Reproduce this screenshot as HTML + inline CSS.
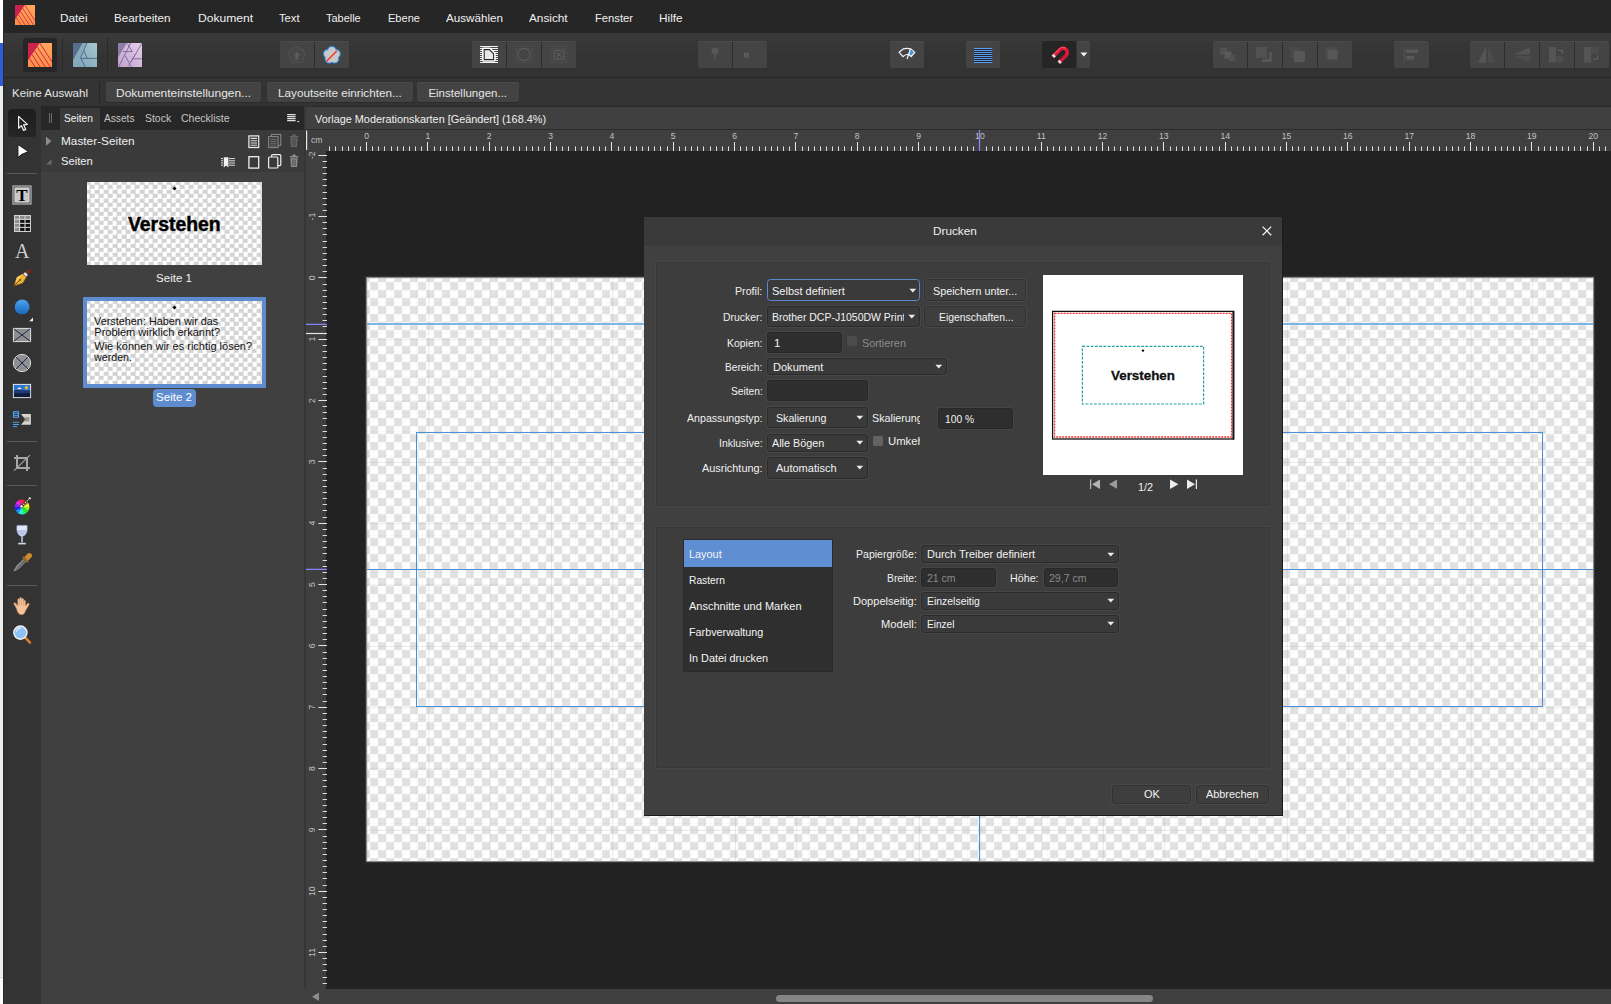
<!DOCTYPE html>
<html><head><meta charset="utf-8"><title>Affinity Publisher</title>
<style>
html,body{margin:0;padding:0;background:#222;}
body{width:1611px;height:1004px;overflow:hidden;position:relative;font-family:"Liberation Sans",sans-serif;}
#r{position:absolute;left:0;top:0;width:1611px;height:1004px;overflow:hidden;}
#r>div,#r>svg{position:absolute;display:block;}
</style></head><body><div id="r">
<div style="left:0px;top:0px;width:1611px;height:1004px;background:#222222;"></div>
<div style="left:0px;top:0px;width:1611px;height:33px;background:#262626;"></div>
<div style="left:0px;top:33px;width:1611px;height:44px;background:linear-gradient(#3a3a3a,#333333 55%);"></div>
<div style="left:0px;top:77px;width:1611px;height:1px;background:#262626;"></div>
<div style="left:0px;top:78px;width:1611px;height:29px;background:#333333;"></div>
<div style="left:0px;top:0px;width:3px;height:43px;background:#ffffff;"></div>
<div style="left:0px;top:43px;width:3px;height:43px;background:#2f5bd8;"></div>
<div style="left:0px;top:86px;width:3px;height:891px;background:#ededed;"></div>
<div style="left:0px;top:977px;width:3px;height:1px;background:#d8d8d8;"></div>
<div style="left:0px;top:978px;width:3px;height:26px;background:#fafafa;"></div>
<div style="left:3px;top:0px;width:1px;height:1004px;background:#2a2a2a;"></div>
<div style="left:4px;top:107px;width:37px;height:897px;background:#333333;"></div>
<div style="left:41px;top:107px;width:263px;height:897px;background:#404040;"></div>
<div style="left:41px;top:107px;width:263px;height:22px;background:#383838;"></div>
<div style="left:304px;top:107px;width:2px;height:897px;background:#363636;"></div>
<div style="left:306px;top:106px;width:1305px;height:1px;background:#2b2b2b;"></div>
<div style="left:306px;top:107px;width:1305px;height:22px;background:#404040;"></div>
<div style="left:306px;top:129px;width:1305px;height:1px;background:#2c2c2c;"></div>
<div style="left:306px;top:130px;width:1305px;height:21px;background:#3f3f3f;"></div>
<div style="left:306px;top:151px;width:20px;height:838px;background:#3f3f3f;"></div>
<div style="left:304px;top:989px;width:1307px;height:15px;background:#3f3f3f;"></div>
<svg style="left:15px;top:5px;" width="20" height="20" viewBox="0 0 20 20"><defs><linearGradient id="pg1" x1="0" y1="0" x2="0" y2="1"><stop offset="0" stop-color="#ffa65c"/><stop offset="1" stop-color="#ff8f48"/></linearGradient></defs><rect width="20" height="20" fill="url(#pg1)"/><path d="M0 0H9.8L0 14.4Z" fill="#c9234b"/><path d="M9.80 0.00L20.00 15.70M7.64 3.17L18.58 20.00M5.49 6.34L14.37 20.00M3.33 9.50L10.15 20.00M1.18 12.67L5.94 20.00" stroke="#c9234b" stroke-width="0.8" fill="none"/></svg>
<div style="left:60.30px;top:12px;font-size:11.5px;line-height:12px;height:12px;color:#f0f0f0;white-space:pre;"><span style="display:inline-block;transform-origin:0 0;transform:scaleX(1.0243);">Datei</span></div>
<div style="left:114.40px;top:12px;font-size:11.5px;line-height:12px;height:12px;color:#f0f0f0;white-space:pre;"><span style="display:inline-block;transform-origin:0 0;transform:scaleX(1.0175);">Bearbeiten</span></div>
<div style="left:197.50px;top:12px;font-size:11.5px;line-height:12px;height:12px;color:#f0f0f0;white-space:pre;"><span style="display:inline-block;transform-origin:0 0;transform:scaleX(1.0532);">Dokument</span></div>
<div style="left:279.30px;top:12px;font-size:11.5px;line-height:12px;height:12px;color:#f0f0f0;white-space:pre;"><span style="display:inline-block;transform-origin:0 0;transform:scaleX(0.9767);">Text</span></div>
<div style="left:326.30px;top:12px;font-size:11.5px;line-height:12px;height:12px;color:#f0f0f0;white-space:pre;"><span style="display:inline-block;transform-origin:0 0;transform:scaleX(0.9521);">Tabelle</span></div>
<div style="left:388.40px;top:12px;font-size:11.5px;line-height:12px;height:12px;color:#f0f0f0;white-space:pre;"><span style="display:inline-block;transform-origin:0 0;transform:scaleX(0.9593);">Ebene</span></div>
<div style="left:446.00px;top:12px;font-size:11.5px;line-height:12px;height:12px;color:#f0f0f0;white-space:pre;"><span style="display:inline-block;transform-origin:0 0;transform:scaleX(1.0131);">Auswählen</span></div>
<div style="left:529.20px;top:12px;font-size:11.5px;line-height:12px;height:12px;color:#f0f0f0;white-space:pre;"><span style="display:inline-block;transform-origin:0 0;transform:scaleX(1.0235);">Ansicht</span></div>
<div style="left:594.60px;top:12px;font-size:11.5px;line-height:12px;height:12px;color:#f0f0f0;white-space:pre;"><span style="display:inline-block;transform-origin:0 0;transform:scaleX(0.9747);">Fenster</span></div>
<div style="left:659.40px;top:12px;font-size:11.5px;line-height:12px;height:12px;color:#f0f0f0;white-space:pre;"><span style="display:inline-block;transform-origin:0 0;transform:scaleX(1.0258);">Hilfe</span></div>
<div style="left:23px;top:38px;width:34px;height:34px;background:#262626;border-radius:3px;"></div>
<svg style="left:28px;top:43px;" width="24" height="24" viewBox="0 0 20 20"><defs><linearGradient id="pg2" x1="0" y1="0" x2="0" y2="1"><stop offset="0" stop-color="#ffa65c"/><stop offset="1" stop-color="#ff8f48"/></linearGradient></defs><rect width="20" height="20" fill="url(#pg2)"/><path d="M0 0H9.8L0 14.4Z" fill="#c9234b"/><path d="M9.80 0.00L20.00 15.70M7.64 3.17L18.58 20.00M5.49 6.34L14.37 20.00M3.33 9.50L10.15 20.00M1.18 12.67L5.94 20.00" stroke="#c9234b" stroke-width="0.8" fill="none"/></svg>
<div style="left:62px;top:38px;width:1px;height:34px;background:#2a2a2a;"></div>
<div style="left:107px;top:38px;width:1px;height:34px;background:#2a2a2a;"></div>
<svg style="left:73px;top:43px;" width="24" height="24" viewBox="0 0 24 24"><defs><linearGradient id="dg" x1="1" y1="0" x2="0" y2="1"><stop offset="0" stop-color="#a8c6d0"/><stop offset="1" stop-color="#7aa2b7"/></linearGradient></defs>
<rect width="24" height="24" fill="url(#dg)"/><path d="M9.6 0H14L7.6 14.8L3.6 24H0V17Z" fill="#86a9bc"/><path d="M0 0H9.6L0 17Z" fill="#566f8a"/>
<g stroke="#4a6882" stroke-width=".9" fill="none"><path d="M14 0L7.6 14.8L12.2 24"/><path d="M7.8 15.4H24"/><path d="M11 8L14.2 15.2"/></g></svg>
<svg style="left:118px;top:43px;" width="24" height="24" viewBox="0 0 24 24"><defs><linearGradient id="phg" x1="1" y1="0" x2="0" y2="1"><stop offset="0" stop-color="#e4cee8"/><stop offset="1" stop-color="#c2a2cd"/></linearGradient></defs>
<rect width="24" height="24" fill="url(#phg)"/><path d="M0 0H9L0 14.6Z" fill="#8e7da8"/>
<g stroke="#7b6898" stroke-width=".9" fill="none"><path d="M12.7 0L.6 24"/><path d="M24 0L12.6 19.6"/><path d="M9.4 .6L14.4 9"/><path d="M5 8.6H14.4"/><path d="M7 12.4L13.4 24"/><path d="M14.6 15.8H24"/><path d="M17.4 11L10 23.6" stroke-width=".7"/></g></svg>
<div style="left:280px;top:41px;width:34.2px;height:27px;background:#444444;border-radius:2px 0px 0px 2px;"></div>
<div style="left:315px;top:41px;width:34.2px;height:27px;background:#444444;border-radius:0px 2px 2px 0px;"></div>
<div style="left:472px;top:41px;width:34.2px;height:27px;background:#444444;border-radius:2px 0px 0px 2px;"></div>
<div style="left:507px;top:41px;width:34.2px;height:27px;background:#444444;border-radius:0px 0px 0px 0px;"></div>
<div style="left:542px;top:41px;width:34.2px;height:27px;background:#444444;border-radius:0px 2px 2px 0px;"></div>
<div style="left:698px;top:41px;width:34.2px;height:27px;background:#444444;border-radius:2px 0px 0px 2px;"></div>
<div style="left:733px;top:41px;width:34.2px;height:27px;background:#444444;border-radius:0px 2px 2px 0px;"></div>
<div style="left:889.7px;top:41px;width:34.5px;height:27px;background:#444444;border-radius:2px 2px 2px 2px;"></div>
<div style="left:965.8px;top:41px;width:34.5px;height:27px;background:#444444;border-radius:2px 2px 2px 2px;"></div>
<div style="left:1042px;top:41px;width:34.4px;height:27px;background:#252525;border-radius:2px 2px 2px 2px;"></div>
<div style="left:1077px;top:41px;width:13px;height:27px;background:#444444;border-radius:2px 2px 2px 2px;"></div>
<div style="left:1213px;top:41px;width:34.2px;height:27px;background:#444444;border-radius:2px 0px 0px 2px;"></div>
<div style="left:1248px;top:41px;width:34.2px;height:27px;background:#444444;border-radius:0px 0px 0px 0px;"></div>
<div style="left:1283px;top:41px;width:34.2px;height:27px;background:#444444;border-radius:0px 0px 0px 0px;"></div>
<div style="left:1318px;top:41px;width:34.2px;height:27px;background:#444444;border-radius:0px 2px 2px 0px;"></div>
<div style="left:1394px;top:41px;width:34.5px;height:27px;background:#444444;border-radius:2px 2px 2px 2px;"></div>
<div style="left:1470px;top:41px;width:34.2px;height:27px;background:#444444;border-radius:2px 0px 0px 2px;"></div>
<div style="left:1505px;top:41px;width:34.2px;height:27px;background:#444444;border-radius:0px 0px 0px 0px;"></div>
<div style="left:1540px;top:41px;width:34.2px;height:27px;background:#444444;border-radius:0px 0px 0px 0px;"></div>
<div style="left:1575px;top:41px;width:34.2px;height:27px;background:#444444;border-radius:0px 2px 2px 0px;"></div>
<div style="left:281px;top:41px;width:67px;height:1px;background:#4c4c4c;"></div>
<div style="left:473px;top:41px;width:102px;height:1px;background:#4c4c4c;"></div>
<div style="left:699px;top:41px;width:67px;height:1px;background:#4c4c4c;"></div>
<div style="left:891px;top:41px;width:32px;height:1px;background:#4c4c4c;"></div>
<div style="left:967px;top:41px;width:32px;height:1px;background:#4c4c4c;"></div>
<div style="left:1078px;top:41px;width:11px;height:1px;background:#4c4c4c;"></div>
<div style="left:1214px;top:41px;width:137px;height:1px;background:#4c4c4c;"></div>
<div style="left:1395px;top:41px;width:32px;height:1px;background:#4c4c4c;"></div>
<div style="left:1471px;top:41px;width:137px;height:1px;background:#4c4c4c;"></div>
<div style="left:314px;top:42px;width:1px;height:26px;background:#2e2e2e;"></div>
<div style="left:506px;top:42px;width:1px;height:26px;background:#2e2e2e;"></div>
<div style="left:541px;top:42px;width:1px;height:26px;background:#2e2e2e;"></div>
<div style="left:732px;top:42px;width:1px;height:26px;background:#2e2e2e;"></div>
<div style="left:1247px;top:42px;width:1px;height:26px;background:#2e2e2e;"></div>
<div style="left:1282px;top:42px;width:1px;height:26px;background:#2e2e2e;"></div>
<div style="left:1317px;top:42px;width:1px;height:26px;background:#2e2e2e;"></div>
<div style="left:1504px;top:42px;width:1px;height:26px;background:#2e2e2e;"></div>
<div style="left:1539px;top:42px;width:1px;height:26px;background:#2e2e2e;"></div>
<div style="left:1574px;top:42px;width:1px;height:26px;background:#2e2e2e;"></div>
<svg style="left:280px;top:41px;" width="69" height="27" viewBox="0 0 69 27"><g fill="#555555" stroke="#555555" stroke-width="1.6"><circle cx="16.80" cy="9.80" r="3.7"/><circle cx="20.98" cy="12.84" r="3.7"/><circle cx="19.39" cy="17.76" r="3.7"/><circle cx="14.21" cy="17.76" r="3.7"/><circle cx="12.62" cy="12.84" r="3.7"/></g><g fill="#474747"><circle cx="16.80" cy="9.80" r="3.7"/><circle cx="20.98" cy="12.84" r="3.7"/><circle cx="19.39" cy="17.76" r="3.7"/><circle cx="14.21" cy="17.76" r="3.7"/><circle cx="12.62" cy="12.84" r="3.7"/><circle cx="16.8" cy="14.2" r="5"/></g><path d="M16.8 10.6L20 14.6H18.2V18.8H15.4V14.6H13.6Z" fill="#5c5c5c"/><g fill="#2f8fe6" stroke="#2f8fe6" stroke-width="2.2"><circle cx="51.90" cy="9.80" r="3.7"/><circle cx="56.08" cy="12.84" r="3.7"/><circle cx="54.49" cy="17.76" r="3.7"/><circle cx="49.31" cy="17.76" r="3.7"/><circle cx="47.72" cy="12.84" r="3.7"/></g><g fill="#c9c9c9"><circle cx="51.90" cy="9.80" r="3.7"/><circle cx="56.08" cy="12.84" r="3.7"/><circle cx="54.49" cy="17.76" r="3.7"/><circle cx="49.31" cy="17.76" r="3.7"/><circle cx="47.72" cy="12.84" r="3.7"/><circle cx="51.9" cy="14.2" r="5"/></g><path d="M46.3 20.5L56.8 10" stroke="#f03a2a" stroke-width="1.6"/></svg>
<svg style="left:472px;top:41px;" width="104" height="27" viewBox="0 0 104 27"><g stroke="#f2f2f2" stroke-width="1"><path d="M8 5.5H26"/><path d="M8 7.5H26"/><path d="M8 9.5H26"/><path d="M8 11.5H26"/><path d="M8 13.5H26"/><path d="M8 15.5H26"/><path d="M8 17.5H26"/><path d="M8 19.5H26"/><path d="M8 21.5H26"/></g><path d="M11.2 7.6H17.8L22.6 12.4V19.6H11.2Z" fill="#e8e8e8" stroke="#fff" stroke-width="2.2" stroke-linejoin="round"/><path d="M12.2 8.6H17.4L21.6 12.8V18.6H12.2Z" fill="#e8e8e8" stroke="#2a2a2a" stroke-width="1.1"/><g stroke="#4a4a4a" stroke-width="1"><path d="M43 5.5H61"/><path d="M78 5.5H96"/><path d="M43 7.5H61"/><path d="M78 7.5H96"/><path d="M43 9.5H61"/><path d="M78 9.5H96"/><path d="M43 11.5H61"/><path d="M78 11.5H96"/><path d="M43 13.5H61"/><path d="M78 13.5H96"/><path d="M43 15.5H61"/><path d="M78 15.5H96"/><path d="M43 17.5H61"/><path d="M78 17.5H96"/><path d="M43 19.5H61"/><path d="M78 19.5H96"/><path d="M43 21.5H61"/><path d="M78 21.5H96"/></g><circle cx="52" cy="13.4" r="6" fill="#444" stroke="#5c5c5c" stroke-width="1.1"/><rect x="82.4" y="9.4" width="9.4" height="8.4" fill="#444" stroke="#5c5c5c" stroke-width="1.1"/><path d="M84.8 11.4L89.4 16M89.4 11.4L84.8 16" stroke="#5c5c5c" stroke-width="1.1"/></svg>
<svg style="left:698px;top:41px;" width="69" height="27" viewBox="0 0 69 27"><circle cx="17" cy="10" r="3.6" fill="#575757"/><path d="M17 10V20" stroke="#575757" stroke-width="1.2"/><rect x="46" y="11.5" width="5" height="5" fill="#5a5a5a"/><path d="M53 13H58M53 16H58" stroke="#484848"/></svg>
<svg style="left:890px;top:41px;" width="34" height="27" viewBox="0 0 34 27"><path d="M19.8 8.8L24.2 11.5L21.3 14.9L18.6 13.7Z" fill="#3d9af0"/>
<path d="M9.1 11.2L13.2 7.9Q17 7 20.8 7.9L24.8 11.4L21.2 15.5Q16.9 11.4 12.9 15.7Z" fill="none" stroke="#f4f4f4" stroke-width="1.25" stroke-linejoin="round"/>
<path d="M20.2 8.6L17.2 17.6" stroke="#f4f4f4" stroke-width="1.25" stroke-linecap="round"/></svg>
<svg style="left:966px;top:41px;" width="34" height="27" viewBox="0 0 34 27"><rect x="8" y="7" width="18.4" height="15" fill="#20242c"/><g stroke="#5c9cf2" stroke-width="1.05"><path d="M8 7.5H26.4"/><path d="M8 9.5H26.4"/><path d="M8 11.5H26.4"/><path d="M8 13.5H26.4"/><path d="M8 15.5H26.4"/><path d="M8 17.5H26.4"/><path d="M8 19.5H26.4"/><path d="M8 21.5H26.4"/></g></svg>
<svg style="left:1042px;top:41px;" width="34" height="27" viewBox="0 0 34 27"><g transform="translate(19.2,13.4) rotate(45)" fill="none"><path d="M-4.2 7.4V-2.6A4.2 4.2 0 0 1 4.2 -2.6V7.4" stroke="#e8173a" stroke-width="3.5"/>
<path d="M-5.2 5V-2.6A5.2 5.2 0 0 1 -1 -7.6" stroke="#f5536c" stroke-width="1"/><path d="M3.4 5V-2.6" stroke="#c01030" stroke-width="1"/>
<path d="M-4.2 7.6V5M4.2 7.6V5" stroke="#e4dcdc" stroke-width="3.5"/></g></svg>
<svg style="left:1077px;top:41px;" width="13" height="27" viewBox="0 0 13 27"><path d="M3.4 11.6H10.4L6.9 15.4Z" fill="#f2f2f2"/></svg>
<svg style="left:1213px;top:41px;" width="139" height="27" viewBox="0 0 139 27"><rect x="7" y="7" width="7" height="7" fill="#515151"/><rect x="11.5" y="10.5" width="7" height="7" fill="#5a5a5a"/><rect x="16" y="14" width="6" height="6" fill="#515151"/><rect x="43" y="6" width="11" height="11" fill="#515151"/><path d="M49 19.5H57.5V11" fill="none" stroke="#595959" stroke-width="2.6"/><rect x="77" y="6" width="11" height="11" fill="#4a4a4a"/><rect x="81" y="10" width="11" height="11" fill="#575757"/><rect x="112" y="6" width="11" height="11" fill="#4a4a4a"/><rect x="114.5" y="8.5" width="10" height="10" fill="#575757"/></svg>
<svg style="left:1394px;top:41px;" width="34" height="27" viewBox="0 0 34 27"><path d="M10.5 6V22" stroke="#505050"/><rect x="12" y="8.5" width="12" height="3.6" fill="#585858"/><rect x="12" y="15" width="8" height="3.6" fill="#585858"/></svg>
<svg style="left:1470px;top:41px;" width="139" height="27" viewBox="0 0 139 27"><path d="M8 21.5L16 6V21.5Z" fill="#555"/><path d="M18 6V21.5H26Z" fill="#4c4c4c"/><path d="M44 13.6L60 6V13.6Z" fill="#555"/><path d="M44 15L60 21.5V15Z" fill="#4c4c4c"/><rect x="79" y="6" width="7" height="15.5" fill="#555"/><rect x="86.5" y="15" width="7" height="6.5" fill="#4c4c4c"/><path d="M88 9.5H92.5V13" fill="none" stroke="#606060" stroke-width="1.2"/><rect x="114" y="6" width="7" height="15.5" fill="#555"/><rect x="121.5" y="6" width="7" height="6.5" fill="#4c4c4c"/><path d="M123 18H127.5V14.5" fill="none" stroke="#606060" stroke-width="1.2"/></svg>
<div style="left:12.00px;top:87px;font-size:11.5px;line-height:12px;height:12px;color:#e6e6e6;white-space:pre;"><span style="display:inline-block;transform-origin:0 0;transform:scaleX(1.0074);">Keine Auswahl</span></div>
<div style="left:99px;top:82px;width:1px;height:21px;background:#262626;"></div>
<div style="left:105.5px;top:82px;width:155.5px;height:20px;background:#434343;border-radius:2px;box-shadow:0 1px 0 #2b2b2b, inset 0 1px 0 #4b4b4b;"></div>
<div style="left:116.30px;top:87px;font-size:11.5px;line-height:12px;height:12px;color:#e6e6e6;white-space:pre;"><span style="display:inline-block;transform-origin:0 0;transform:scaleX(1.0410);">Dokumenteinstellungen...</span></div>
<div style="left:266.5px;top:82px;width:146px;height:20px;background:#434343;border-radius:2px;box-shadow:0 1px 0 #2b2b2b, inset 0 1px 0 #4b4b4b;"></div>
<div style="left:277.60px;top:87px;font-size:11.5px;line-height:12px;height:12px;color:#e6e6e6;white-space:pre;"><span style="display:inline-block;transform-origin:0 0;transform:scaleX(1.0184);">Layoutseite einrichten...</span></div>
<div style="left:417.4px;top:82px;width:101.2px;height:20px;background:#434343;border-radius:2px;box-shadow:0 1px 0 #2b2b2b, inset 0 1px 0 #4b4b4b;"></div>
<div style="left:428.40px;top:87px;font-size:11.5px;line-height:12px;height:12px;color:#e6e6e6;white-space:pre;">Einstellungen...</div>
<div style="left:8px;top:109px;width:28px;height:28px;background:linear-gradient(#1d1d1d,#252525);border-radius:3.5px;"></div>
<svg style="left:8px;top:109px;" width="28" height="28" viewBox="0 0 28 28"><path d="M10.6 7.4V19.2L13.4 16.6L15.6 21.4L17.8 20.4L15.6 15.8L19.4 15.4Z" fill="#222" stroke="#f2f2f2" stroke-width="1.2" stroke-linejoin="round"/></svg>
<svg style="left:8px;top:137px;" width="28" height="28" viewBox="0 0 28 28"><path d="M10.4 8.2V19.8L13.6 17L19.6 14.6Z" fill="#ffffff" stroke="#0c0c0c" stroke-width="1.3" stroke-linejoin="round" paint-order="stroke"/></svg>
<div style="left:7px;top:173px;width:30px;height:1px;background:#575757;"></div>
<div style="left:7px;top:441px;width:30px;height:1px;background:#575757;"></div>
<div style="left:7px;top:485px;width:30px;height:1px;background:#575757;"></div>
<div style="left:7px;top:585px;width:30px;height:1px;background:#575757;"></div>
<svg style="left:12px;top:185px;" width="20" height="20" viewBox="0 0 20 20"><rect x="1" y="1" width="18" height="18" fill="#333" stroke="#d6d6d6" stroke-width="1"/><rect x="2.8" y="2.8" width="14.4" height="14.4" fill="#c9c9c9" stroke="#e8e8e8" stroke-width="0.6"/><text x="10" y="16.2" text-anchor="middle" font-family="Liberation Serif" font-weight="bold" font-size="17" fill="#000">T</text></svg>
<svg style="left:13.5px;top:214.5px;" width="17" height="17" viewBox="0 0 17 17"><rect x="0.5" y="0.5" width="16" height="16" fill="#111" stroke="#cfcfcf"/><rect x="1" y="1" width="4.4" height="15" fill="#8c8c8c"/><rect x="1" y="1" width="15" height="3.2" fill="#8c8c8c"/><g stroke="#cfcfcf" stroke-width="1.1"><path d="M0 4.4H17"/><path d="M0 8.4H17"/><path d="M0 12.4H17"/><path d="M5.6 0V17"/><path d="M11 0V17"/></g></svg>
<div style="left:15px;top:241.3px;font-family:'Liberation Serif',serif;font-size:20px;line-height:20px;color:#cfcfcf;">A</div>
<svg style="left:10px;top:266px;" width="24" height="24" viewBox="0 0 24 24"><g transform="translate(12,12) rotate(45)"><path d="M-1.7 -11.5H1.7V-6.5H-1.7Z" fill="#7a2a14"/><path d="M-2.2 -6.6H2.2V-3.6H-2.2Z" fill="#e8e8e8" stroke="#333" stroke-width="0.5"/>
<path d="M-2.4 -3.6H2.4L4.2 3L0 11.4L-4.2 3Z" fill="#f0b33a" stroke="#8a5a10" stroke-width="0.6"/><path d="M0 11.4V3" stroke="#5a3a08" stroke-width="0.8"/><circle cx="0" cy="2.6" r="0.9" fill="#5a3a08"/>
<path d="M-2.4 -3.6L-4.2 3L-1.5 8.4Z" fill="#ffe08a" opacity=".7"/></g></svg>
<svg style="left:13px;top:298px;" width="22" height="26" viewBox="0 0 22 26"><defs><linearGradient id="eg" x1="0" y1="0" x2="0" y2="1"><stop offset="0" stop-color="#4ea2ee"/><stop offset="1" stop-color="#1769bd"/></linearGradient></defs><circle cx="9.1" cy="8.9" r="7.4" fill="url(#eg)"/><path d="M20 19.4V23.2H16.2Z" fill="#f0f0f0"/></svg>
<svg style="left:12px;top:327px;" width="20" height="16" viewBox="0 0 20 16"><rect x="1.4" y="1.4" width="17.2" height="13.2" fill="#8f8f8f" stroke="#e0e0e0" stroke-width="1"/><path d="M1.8 1.8L18.2 14.2M18.2 1.8L1.8 14.2" stroke="#111a44" stroke-width="0.9"/></svg>
<svg style="left:12px;top:353px;" width="20" height="20" viewBox="0 0 20 20"><circle cx="10" cy="10" r="8.6" fill="#8f8f8f" stroke="#e0e0e0" stroke-width="1"/><path d="M4 4L16 16M16 4L4 16" stroke="#111a44" stroke-width="0.9"/></svg>
<svg style="left:12px;top:383px;" width="20" height="16" viewBox="0 0 20 16"><rect x="1.4" y="1.4" width="17.2" height="13.2" fill="#2a76d8" stroke="#e8e8e8" stroke-width="1"/>
<rect x="1.9" y="7.6" width="16.2" height="6.5" fill="#101c3c"/><path d="M1.9 8L8 5.4L13 8.6L18.1 7.6V10L1.9 10.4Z" fill="#1f3a74"/><path d="M5 6.2L7.4 4.2L10 6.2Z" fill="#fff"/><circle cx="14.4" cy="4.8" r="1.7" fill="#f5b52a"/></svg>
<svg style="left:12px;top:410px;" width="20" height="18" viewBox="0 0 20 18"><rect x="1.5" y="1.7" width="5" height="5.6" fill="none" stroke="#4ea2f2" stroke-width="1.1"/><path d="M1.5 3.6H6.5M1.5 5.5H6.5" stroke="#4ea2f2" stroke-width=".9"/><path d="M1 12.3H7M1 14.5H7M1 16.6H5" stroke="#4ea2f2" stroke-width="1"/>
<path d="M9 4.1H18.9V14.7H9L13.4 9.4Z" fill="#d6d6ce"/><path d="M11.6 7.2H17.4V11.6H11.6L13.4 9.4Z" fill="#97978d"/></svg>
<svg style="left:12px;top:453px;" width="20" height="20" viewBox="0 0 20 20"><path d="M5 2V15H18M2 5H15V18" fill="none" stroke="#a6a6a6" stroke-width="2"/><path d="M2 17.6L18 2.2" stroke="#a6a6a6" stroke-width="1.1"/></svg>
<svg style="left:13px;top:496px;" width="20" height="20" viewBox="0 0 20 20"><path d="M9 11L9.00 3.60A7.4 7.4 0 0 1 12.81 4.66Z" fill="rgb(242,36,36)"/><path d="M9 11L12.70 4.59A7.4 7.4 0 0 1 15.47 7.41Z" fill="rgb(242,139,36)"/><path d="M9 11L15.41 7.30A7.4 7.4 0 0 1 16.40 11.13Z" fill="rgb(242,242,36)"/><path d="M9 11L16.40 11.00A7.4 7.4 0 0 1 15.34 14.81Z" fill="rgb(139,242,36)"/><path d="M9 11L15.41 14.70A7.4 7.4 0 0 1 12.59 17.47Z" fill="rgb(36,242,36)"/><path d="M9 11L12.70 17.41A7.4 7.4 0 0 1 8.87 18.40Z" fill="rgb(36,242,139)"/><path d="M9 11L9.00 18.40A7.4 7.4 0 0 1 5.19 17.34Z" fill="rgb(36,242,242)"/><path d="M9 11L5.30 17.41A7.4 7.4 0 0 1 2.53 14.59Z" fill="rgb(36,139,242)"/><path d="M9 11L2.59 14.70A7.4 7.4 0 0 1 1.60 10.87Z" fill="rgb(36,36,242)"/><path d="M9 11L1.60 11.00A7.4 7.4 0 0 1 2.66 7.19Z" fill="rgb(139,36,242)"/><path d="M9 11L2.59 7.30A7.4 7.4 0 0 1 5.41 4.53Z" fill="rgb(242,36,242)"/><path d="M9 11L5.30 4.59A7.4 7.4 0 0 1 9.13 3.60Z" fill="rgb(242,36,139)"/><path d="M8.6 10.4L16.8 2.2" stroke="#222" stroke-width="2.6"/><path d="M8.6 10.4L16.8 2.2" stroke="#f4f4f4" stroke-width="1.2" stroke-dasharray="1.4 1"/><circle cx="8.6" cy="10.4" r="1.6" fill="#fff" stroke="#222" stroke-width=".6"/><circle cx="16.8" cy="2.2" r="1.3" fill="#fff" stroke="#222" stroke-width=".5"/></svg>
<svg style="left:14px;top:523px;" width="16" height="24" viewBox="0 0 16 24"><path d="M3 2.4H13C13.6 7 13 12.4 8 13.4C3 12.4 2.4 7 3 2.4Z" fill="#dfe6f6" stroke="#9fb0d8" stroke-width=".6"/><path d="M3.6 7H12.4C12.4 10 11 12.4 8 12.8C5 12.4 3.6 10 3.6 7Z" fill="#b8c4e8"/>
<path d="M8 13.4V19.6" stroke="#d0d8f0" stroke-width="1.4"/><path d="M4.2 20.6H11.8" stroke="#d0d8f0" stroke-width="1.6"/></svg>
<svg style="left:11px;top:551px;" width="22" height="24" viewBox="0 0 22 24"><g transform="translate(11,12) rotate(45)"><path d="M-2.6 -10.4A2.6 2.6 0 0 1 2.6 -10.4V-5.6H-2.6Z" fill="#c98a34"/><rect x="-3.6" y="-5.8" width="7.2" height="2" fill="#a06a20"/>
<path d="M-2 -3.8H2V6L0.6 11.4H-0.6L-2 6Z" fill="#8a8a8a"/><path d="M-0.4 -3.8H1V6L0.4 10Z" fill="#5a5a5a"/></g></svg>
<svg style="left:11px;top:596px;" width="22" height="22" viewBox="0 0 22 22"><path d="M5.4 12.2L3 8.2C2.4 7.2 3.8 6.2 4.6 7.2L6.8 10V3.6C6.8 2.4 8.6 2.4 8.6 3.6V2.4C8.6 1.2 10.6 1.2 10.6 2.4V3.4C10.6 2.2 12.6 2.2 12.6 3.4V5C12.6 4 14.4 4 14.4 5V10L16.6 7.6C17.4 6.8 18.8 7.6 18 8.8L14.6 14.4C13.6 17.6 12.6 18.6 10.6 18.6C7.6 18.6 6.4 16 5.4 12.2Z" fill="#f3c29a" stroke="#c98d62" stroke-width=".6"/>
<path d="M8.6 4V9.6M10.6 3.6V9.4M12.6 5V9.8" stroke="#c98d62" stroke-width=".5"/></svg>
<svg style="left:11px;top:623px;" width="22" height="22" viewBox="0 0 22 22"><path d="M13 13.4L19 19.6" stroke="#e0822a" stroke-width="2.4" stroke-linecap="round"/><circle cx="9.4" cy="9.6" r="6.6" fill="#8ec2f4" stroke="#f2f2f2" stroke-width="1.4"/><path d="M5.4 8.6A4.4 4.4 0 0 1 10 5.2" stroke="#e4f2ff" stroke-width="1.2" fill="none"/></svg>
<div style="left:41px;top:106px;width:263px;height:24px;background:#272727;"></div>
<div style="left:59.5px;top:108px;width:40px;height:22px;background:#3a3a3a;"></div>
<div style="left:41px;top:130px;width:263px;height:42px;background:#3a3a3a;"></div>
<div style="left:48.6px;top:113px;width:1px;height:10px;background:#6a6a6a;"></div>
<div style="left:51px;top:113px;width:1px;height:10px;background:#6a6a6a;"></div>
<div style="left:64.40px;top:112px;font-size:11.5px;line-height:12px;height:12px;color:#f4f4f4;white-space:pre;"><span style="display:inline-block;transform-origin:0 0;transform:scaleX(0.8832);">Seiten</span></div>
<div style="left:104.30px;top:112px;font-size:11.5px;line-height:12px;height:12px;color:#c6c6c6;white-space:pre;"><span style="display:inline-block;transform-origin:0 0;transform:scaleX(0.8838);">Assets</span></div>
<div style="left:145.20px;top:112px;font-size:11.5px;line-height:12px;height:12px;color:#c6c6c6;white-space:pre;"><span style="display:inline-block;transform-origin:0 0;transform:scaleX(0.9075);">Stock</span></div>
<div style="left:181.00px;top:112px;font-size:11.5px;line-height:12px;height:12px;color:#c6c6c6;white-space:pre;"><span style="display:inline-block;transform-origin:0 0;transform:scaleX(0.9161);">Checkliste</span></div>
<svg style="left:286px;top:112px;" width="16" height="12" viewBox="0 0 16 12"><path d="M1.2 2.6H9.6M1.2 4.6H9.6M1.2 6.6H9.6M1.2 8.6H9.6" stroke="#e2e2e2" stroke-width="1.1"/><path d="M10.8 9H13.6L12.2 10.6Z" fill="#e2e2e2"/></svg>
<svg style="left:45px;top:135px;" width="8" height="12" viewBox="0 0 8 12"><path d="M1 1.6L6.4 6.2L1 10.8Z" fill="#8c8c8c"/></svg>
<svg style="left:45px;top:157px;" width="8" height="9" viewBox="0 0 8 9"><path d="M6.6 2V7.4H1.2Z" fill="#6a6a6a"/></svg>
<div style="left:61.20px;top:135px;font-size:11.5px;line-height:12px;height:12px;color:#f0f0f0;white-space:pre;"><span style="display:inline-block;transform-origin:0 0;transform:scaleX(1.0281);">Master-Seiten</span></div>
<div style="left:61.20px;top:155px;font-size:11.5px;line-height:12px;height:12px;color:#f0f0f0;white-space:pre;"><span style="display:inline-block;transform-origin:0 0;transform:scaleX(0.9752);">Seiten</span></div>
<svg style="left:247px;top:134px;" width="14" height="15" viewBox="0 0 14 15"><rect x="1.9" y="1.9" width="9.8" height="11.6" fill="#3a3a3a" stroke="#f0f0f0" stroke-width="1.2"/><path d="M3.6 4.4H10M3.6 6.8H10M3.6 9H10M3.6 11.2H10" stroke="#e0e0e0" stroke-width="1.1"/></svg>
<svg style="left:267px;top:133px;" width="16" height="16" viewBox="0 0 16 16"><rect x="4.4" y="1.4" width="9.4" height="11" fill="none" stroke="#8a8a8a" stroke-width="1"/><rect x="1.6" y="3.6" width="9.4" height="11" fill="#3a3a3a" stroke="#8a8a8a" stroke-width="1"/><path d="M3.2 6.4H9.4M3.2 8.6H9.4M3.2 10.8H9.4M3.2 13H9.4" stroke="#7a7a7a" stroke-width=".9"/></svg>
<svg style="left:289px;top:134px;" width="10" height="14" viewBox="0 0 10 14"><path d="M3.4 1.2H6.6M0.8 2.8H9.2" stroke="#666" stroke-width="1.4"/><path d="M1.4 4.2H8.6L8 13H2Z" fill="#666"/><path d="M3.6 5.4V12M5 5.4V12M6.4 5.4V12" stroke="#3a3a3a" stroke-width=".6"/></svg>
<svg style="left:289px;top:154px;" width="10" height="14" viewBox="0 0 10 14"><path d="M3.4 1.2H6.6M0.8 2.8H9.2" stroke="#8e8e8e" stroke-width="1.4"/><path d="M1.4 4.2H8.6L8 13H2Z" fill="#8e8e8e"/><path d="M3.6 5.4V12M5 5.4V12M6.4 5.4V12" stroke="#3a3a3a" stroke-width=".6"/></svg>
<svg style="left:220px;top:156px;" width="16" height="13" viewBox="0 0 16 13"><path d="M1 2.6H3M1 4.8H3M1 7H3M1 9.2H3M9 2.6H15M9 4.8H15M9 7H15M9 9.2H15" stroke="#dcdcdc" stroke-width="1"/><path d="M3.8 1.2H8.4V11.6L6.1 9.4L3.8 11.6Z" fill="#f2f2f2"/></svg>
<svg style="left:247px;top:155px;" width="14" height="15" viewBox="0 0 14 15"><rect x="1.9" y="1.7" width="9.8" height="11.4" fill="#3a3a3a" stroke="#f0f0f0" stroke-width="1.3"/></svg>
<svg style="left:267px;top:153px;" width="16" height="16" viewBox="0 0 16 16"><rect x="4.6" y="1.6" width="9.2" height="11" fill="none" stroke="#f0f0f0" stroke-width="1.2" rx="1"/><rect x="1.6" y="4" width="9.2" height="11" fill="#3a3a3a" stroke="#f0f0f0" stroke-width="1.2" rx="1"/></svg>
<div style="left:87px;top:181.8px;width:175.3px;height:83.3px;background:#fff;background-color:#fff;background-image:conic-gradient(#d3d3d3 25%,#fff 0 50%,#d3d3d3 0 75%,#fff 0);background-size:9px 9px;background-position:-1.35px -6.2px;"></div>
<div style="left:172.7px;top:187.1px;width:3px;height:3px;background:#000;transform:rotate(45deg);"></div>
<div style="left:128.00px;top:213px;font-size:20px;line-height:22px;height:22px;color:#000;white-space:pre;font-weight:bold;-webkit-text-stroke:.45px #000;"><span style="display:inline-block;transform-origin:0 0;transform:scaleX(0.9685);">Verstehen</span></div>
<div style="left:156.20px;top:272px;font-size:11.5px;line-height:12px;height:12px;color:#f0f0f0;white-space:pre;"><span style="display:inline-block;transform-origin:0 0;transform:scaleX(1.0055);">Seite 1</span></div>
<div style="left:83px;top:297.2px;width:183px;height:90.6px;background:#5e8ccf;border-radius:1px;"></div>
<div style="left:87px;top:301.4px;width:175.3px;height:82.8px;background:#fff;background-color:#fff;background-image:conic-gradient(#d3d3d3 25%,#fff 0 50%,#d3d3d3 0 75%,#fff 0);background-size:9px 9px;background-position:-1.35px -6.2px;"></div>
<div style="left:172.7px;top:305.5px;width:3px;height:3px;background:#000;transform:rotate(45deg);"></div>
<div style="left:94.30px;top:315px;font-size:11px;line-height:12px;height:12px;color:#111;white-space:pre;"><span style="display:inline-block;transform-origin:0 0;transform:scaleX(0.9868);">Verstehen: Haben wir das</span></div>
<div style="left:94.30px;top:326px;font-size:11px;line-height:12px;height:12px;color:#111;white-space:pre;">Problem wirklich erkannt?</div>
<div style="left:94.30px;top:340px;font-size:11px;line-height:12px;height:12px;color:#111;white-space:pre;">Wie können wir es richtig lösen?</div>
<div style="left:94.30px;top:351px;font-size:11px;line-height:12px;height:12px;color:#111;white-space:pre;"><span style="display:inline-block;transform-origin:0 0;transform:scaleX(0.9710);">werden.</span></div>
<div style="left:152.8px;top:389.3px;width:43.5px;height:17.5px;background:#5e8ccf;border-radius:4px;"></div>
<div style="left:156.20px;top:391px;font-size:11.5px;line-height:12px;height:12px;color:#fff;white-space:pre;"><span style="display:inline-block;transform-origin:0 0;transform:scaleX(1.0055);">Seite 2</span></div>
<div style="left:315.10px;top:113px;font-size:11.5px;line-height:12px;height:12px;color:#f0f0f0;white-space:pre;"><span style="display:inline-block;transform-origin:0 0;transform:scaleX(0.9435);">Vorlage Moderationskarten [Geändert] (168.4%)</span></div>
<svg style="left:306px;top:130px;" width="1305" height="21" viewBox="0 0 1305 21"><path d="M23.5 16.4V21M29.5 16.4V21M36.5 16.4V21M42.5 16.4V21M48.5 16.4V21M54.5 16.4V21M66.5 16.4V21M72.5 16.4V21M78.5 16.4V21M85.5 16.4V21M91.5 16.4V21M97.5 16.4V21M103.5 16.4V21M109.5 16.4V21M115.5 16.4V21M128.5 16.4V21M134.5 16.4V21M140.5 16.4V21M146.5 16.4V21M152.5 16.4V21M158.5 16.4V21M164.5 16.4V21M170.5 16.4V21M177.5 16.4V21M189.5 16.4V21M195.5 16.4V21M201.5 16.4V21M207.5 16.4V21M213.5 16.4V21M220.5 16.4V21M226.5 16.4V21M232.5 16.4V21M238.5 16.4V21M250.5 16.4V21M256.5 16.4V21M262.5 16.4V21M269.5 16.4V21M275.5 16.4V21M281.5 16.4V21M287.5 16.4V21M293.5 16.4V21M299.5 16.4V21M312.5 16.4V21M318.5 16.4V21M324.5 16.4V21M330.5 16.4V21M336.5 16.4V21M342.5 16.4V21M348.5 16.4V21M354.5 16.4V21M361.5 16.4V21M373.5 16.4V21M379.5 16.4V21M385.5 16.4V21M391.5 16.4V21M397.5 16.4V21M404.5 16.4V21M410.5 16.4V21M416.5 16.4V21M422.5 16.4V21M434.5 16.4V21M440.5 16.4V21M446.5 16.4V21M453.5 16.4V21M459.5 16.4V21M465.5 16.4V21M471.5 16.4V21M477.5 16.4V21M483.5 16.4V21M496.5 16.4V21M502.5 16.4V21M508.5 16.4V21M514.5 16.4V21M520.5 16.4V21M526.5 16.4V21M532.5 16.4V21M538.5 16.4V21M545.5 16.4V21M557.5 16.4V21M563.5 16.4V21M569.5 16.4V21M575.5 16.4V21M581.5 16.4V21M588.5 16.4V21M594.5 16.4V21M600.5 16.4V21M606.5 16.4V21M618.5 16.4V21M624.5 16.4V21M630.5 16.4V21M637.5 16.4V21M643.5 16.4V21M649.5 16.4V21M655.5 16.4V21M661.5 16.4V21M667.5 16.4V21M680.5 16.4V21M686.5 16.4V21M692.5 16.4V21M698.5 16.4V21M704.5 16.4V21M710.5 16.4V21M716.5 16.4V21M722.5 16.4V21M729.5 16.4V21M741.5 16.4V21M747.5 16.4V21M753.5 16.4V21M759.5 16.4V21M765.5 16.4V21M772.5 16.4V21M778.5 16.4V21M784.5 16.4V21M790.5 16.4V21M802.5 16.4V21M808.5 16.4V21M814.5 16.4V21M821.5 16.4V21M827.5 16.4V21M833.5 16.4V21M839.5 16.4V21M845.5 16.4V21M851.5 16.4V21M864.5 16.4V21M870.5 16.4V21M876.5 16.4V21M882.5 16.4V21M888.5 16.4V21M894.5 16.4V21M900.5 16.4V21M906.5 16.4V21M913.5 16.4V21M925.5 16.4V21M931.5 16.4V21M937.5 16.4V21M943.5 16.4V21M949.5 16.4V21M956.5 16.4V21M962.5 16.4V21M968.5 16.4V21M974.5 16.4V21M986.5 16.4V21M992.5 16.4V21M998.5 16.4V21M1005.5 16.4V21M1011.5 16.4V21M1017.5 16.4V21M1023.5 16.4V21M1029.5 16.4V21M1035.5 16.4V21M1048.5 16.4V21M1054.5 16.4V21M1060.5 16.4V21M1066.5 16.4V21M1072.5 16.4V21M1078.5 16.4V21M1084.5 16.4V21M1090.5 16.4V21M1097.5 16.4V21M1109.5 16.4V21M1115.5 16.4V21M1121.5 16.4V21M1127.5 16.4V21M1133.5 16.4V21M1140.5 16.4V21M1146.5 16.4V21M1152.5 16.4V21M1158.5 16.4V21M1170.5 16.4V21M1176.5 16.4V21M1182.5 16.4V21M1189.5 16.4V21M1195.5 16.4V21M1201.5 16.4V21M1207.5 16.4V21M1213.5 16.4V21M1219.5 16.4V21M1232.5 16.4V21M1238.5 16.4V21M1244.5 16.4V21M1250.5 16.4V21M1256.5 16.4V21M1262.5 16.4V21M1268.5 16.4V21M1274.5 16.4V21M1281.5 16.4V21M1293.5 16.4V21M1299.5 16.4V21" stroke="#dcdcdc" stroke-width="1"/><path d="M60.5 12V21M121.5 12V21M183.5 12V21M244.5 12V21M305.5 12V21M367.5 12V21M428.5 12V21M489.5 12V21M551.5 12V21M612.5 12V21M673.5 12V21M735.5 12V21M796.5 12V21M857.5 12V21M919.5 12V21M980.5 12V21M1041.5 12V21M1103.5 12V21M1164.5 12V21M1225.5 12V21M1287.5 12V21" stroke="#e6e6e6" stroke-width="1"/><g font-family="Liberation Sans" font-size="8.6" fill="#c2c2c2"><text x="60.60" y="9.4" text-anchor="middle">0</text><text x="121.93" y="9.4" text-anchor="middle">1</text><text x="183.26" y="9.4" text-anchor="middle">2</text><text x="244.59" y="9.4" text-anchor="middle">3</text><text x="305.92" y="9.4" text-anchor="middle">4</text><text x="367.25" y="9.4" text-anchor="middle">5</text><text x="428.58" y="9.4" text-anchor="middle">6</text><text x="489.91" y="9.4" text-anchor="middle">7</text><text x="551.24" y="9.4" text-anchor="middle">8</text><text x="612.57" y="9.4" text-anchor="middle">9</text><text x="673.90" y="9.4" text-anchor="middle">10</text><text x="735.23" y="9.4" text-anchor="middle">11</text><text x="796.56" y="9.4" text-anchor="middle">12</text><text x="857.89" y="9.4" text-anchor="middle">13</text><text x="919.22" y="9.4" text-anchor="middle">14</text><text x="980.55" y="9.4" text-anchor="middle">15</text><text x="1041.88" y="9.4" text-anchor="middle">16</text><text x="1103.21" y="9.4" text-anchor="middle">17</text><text x="1164.54" y="9.4" text-anchor="middle">18</text><text x="1225.87" y="9.4" text-anchor="middle">19</text><text x="1287.20" y="9.4" text-anchor="middle">20</text><text x="5" y="13">cm</text></g><path d="M0.6 0.5V20" stroke="#e8e8e8" stroke-width="1.2"/><path d="M673.5 0V21" stroke="#8484ff" stroke-width="1.3"/></svg>
<svg style="left:306px;top:151px;" width="21" height="838" viewBox="0 0 21 838"><path d="M16.6 10.5H21M16.6 16.5H21M16.6 22.5H21M16.6 28.5H21M16.6 34.5H21M16.6 41.5H21M16.6 47.5H21M16.6 53.5H21M16.6 59.5H21M16.6 71.5H21M16.6 77.5H21M16.6 83.5H21M16.6 90.5H21M16.6 96.5H21M16.6 102.5H21M16.6 108.5H21M16.6 114.5H21M16.6 120.5H21M16.6 133.5H21M16.6 139.5H21M16.6 145.5H21M16.6 151.5H21M16.6 157.5H21M16.6 163.5H21M16.6 169.5H21M16.6 175.5H21M16.6 182.5H21M16.6 194.5H21M16.6 200.5H21M16.6 206.5H21M16.6 212.5H21M16.6 218.5H21M16.6 225.5H21M16.6 231.5H21M16.6 237.5H21M16.6 243.5H21M16.6 255.5H21M16.6 261.5H21M16.6 267.5H21M16.6 274.5H21M16.6 280.5H21M16.6 286.5H21M16.6 292.5H21M16.6 298.5H21M16.6 304.5H21M16.6 317.5H21M16.6 323.5H21M16.6 329.5H21M16.6 335.5H21M16.6 341.5H21M16.6 347.5H21M16.6 353.5H21M16.6 359.5H21M16.6 366.5H21M16.6 378.5H21M16.6 384.5H21M16.6 390.5H21M16.6 396.5H21M16.6 402.5H21M16.6 409.5H21M16.6 415.5H21M16.6 421.5H21M16.6 427.5H21M16.6 439.5H21M16.6 445.5H21M16.6 451.5H21M16.6 458.5H21M16.6 464.5H21M16.6 470.5H21M16.6 476.5H21M16.6 482.5H21M16.6 488.5H21M16.6 501.5H21M16.6 507.5H21M16.6 513.5H21M16.6 519.5H21M16.6 525.5H21M16.6 531.5H21M16.6 537.5H21M16.6 543.5H21M16.6 550.5H21M16.6 562.5H21M16.6 568.5H21M16.6 574.5H21M16.6 580.5H21M16.6 586.5H21M16.6 593.5H21M16.6 599.5H21M16.6 605.5H21M16.6 611.5H21M16.6 623.5H21M16.6 629.5H21M16.6 635.5H21M16.6 642.5H21M16.6 648.5H21M16.6 654.5H21M16.6 660.5H21M16.6 666.5H21M16.6 672.5H21M16.6 685.5H21M16.6 691.5H21M16.6 697.5H21M16.6 703.5H21M16.6 709.5H21M16.6 715.5H21M16.6 721.5H21M16.6 727.5H21M16.6 734.5H21M16.6 746.5H21M16.6 752.5H21M16.6 758.5H21M16.6 764.5H21M16.6 770.5H21M16.6 776.5H21M16.6 783.5H21M16.6 789.5H21M16.6 795.5H21M16.6 807.5H21M16.6 813.5H21M16.6 819.5H21M16.6 826.5H21M16.6 832.5H21" stroke="#dcdcdc" stroke-width="1"/><path d="M12.4 4.5H21M12.4 65.5H21M12.4 126.5H21M12.4 188.5H21M12.4 249.5H21M12.4 310.5H21M12.4 372.5H21M12.4 433.5H21M12.4 494.5H21M12.4 556.5H21M12.4 617.5H21M12.4 678.5H21M12.4 740.5H21M12.4 801.5H21" stroke="#e6e6e6" stroke-width="1"/><g font-family="Liberation Sans" font-size="8.6" fill="#c2c2c2"><text transform="translate(8.7,4.24) rotate(-90)" text-anchor="middle">-2</text><text transform="translate(8.7,65.57) rotate(-90)" text-anchor="middle">-1</text><text transform="translate(8.7,126.90) rotate(-90)" text-anchor="middle">0</text><text transform="translate(8.7,188.23) rotate(-90)" text-anchor="middle">1</text><text transform="translate(8.7,249.56) rotate(-90)" text-anchor="middle">2</text><text transform="translate(8.7,310.89) rotate(-90)" text-anchor="middle">3</text><text transform="translate(8.7,372.22) rotate(-90)" text-anchor="middle">4</text><text transform="translate(8.7,433.55) rotate(-90)" text-anchor="middle">5</text><text transform="translate(8.7,494.88) rotate(-90)" text-anchor="middle">6</text><text transform="translate(8.7,556.21) rotate(-90)" text-anchor="middle">7</text><text transform="translate(8.7,617.54) rotate(-90)" text-anchor="middle">8</text><text transform="translate(8.7,678.87) rotate(-90)" text-anchor="middle">9</text><text transform="translate(8.7,740.20) rotate(-90)" text-anchor="middle">10</text><text transform="translate(8.7,801.53) rotate(-90)" text-anchor="middle">11</text></g><path d="M0 173.4H21M0 418.4H21" stroke="#8484ff" stroke-width="1.3"/><path d="M0 182.5H21" stroke="#e8e8e8" stroke-width="1.2"/></svg>
<div style="left:326.5px;top:151px;width:1284.5px;height:838px;background:#222222;"></div>
<div style="left:365.5px;top:276.5px;width:1228px;height:585px;background:#8a8a8a;box-shadow:0 0 2px #555;"></div>
<div style="left:366.5px;top:277.5px;width:1226px;height:583px;background:#fff;background-color:#fff;background-image:conic-gradient(#e2e2e2 25%,#fff 0 50%,#e2e2e2 0 75%,#fff 0);background-size:16px 16px;background-position:3.1px -3.9px;"></div>
<div style="left:366.5px;top:277.5px;width:1226px;height:583px;background:transparent;background-image:linear-gradient(90deg,rgba(110,110,110,.12) 1px,transparent 1px),linear-gradient(rgba(110,110,110,.12) 1px,transparent 1px),linear-gradient(90deg,rgba(150,150,150,.06) 1px,transparent 1px),linear-gradient(rgba(150,150,150,.06) 1px,transparent 1px);background-size:61.33px 61.33px,61.33px 61.33px,6.133px 6.133px,6.133px 6.133px;"></div>
<div style="left:366.5px;top:323.2px;width:1226px;height:2px;background:#7ab8e6;"></div>
<div style="left:366.5px;top:569px;width:1226px;height:1.3px;background:#4a90d9;"></div>
<div style="left:979px;top:277.5px;width:1.2px;height:583px;background:#4a90d9;"></div>
<div style="left:416px;top:432px;width:1127px;height:275px;background:transparent;box-sizing:border-box;border:1.3px solid #4a90d9;"></div>
<svg style="left:310px;top:990px;" width="12" height="13" viewBox="0 0 12 13"><path d="M9 2.4V11L2 6.7Z" fill="#8c8c8c"/></svg>
<div style="left:776.2px;top:994.5px;width:377px;height:7.5px;background:#868686;border-radius:4px;"></div>
<div style="left:644px;top:217px;width:639px;height:599px;background:#1c1c1c;"></div>
<div style="left:644px;top:217px;width:638px;height:598px;background:#404040;"></div>
<div style="left:644px;top:217px;width:638px;height:29px;background:#3a3a3a;"></div>
<div style="left:933.30px;top:225px;font-size:11.5px;line-height:12px;height:12px;color:#f0f0f0;white-space:pre;"><span style="display:inline-block;transform-origin:0 0;transform:scaleX(1.0205);">Drucken</span></div>
<svg style="left:1261px;top:225px;" width="12" height="12" viewBox="0 0 12 12"><path d="M1.6 1.6L10.2 10.2M10.2 1.6L1.6 10.2" stroke="#f0f0f0" stroke-width="1.3"/></svg>
<div style="left:656px;top:262px;width:614px;height:244px;background:#3d3d3d;box-sizing:border-box;border:1px solid #383838;box-shadow:0 0 0 1px #454545;"></div>
<div style="left:656px;top:527px;width:614px;height:240.5px;background:#3d3d3d;box-sizing:border-box;border:1px solid #383838;box-shadow:0 0 0 1px #454545;"></div>
<div style="left:735.30px;top:285px;font-size:11.5px;line-height:12px;height:12px;color:#f0f0f0;white-space:pre;"><span style="display:inline-block;transform-origin:0 0;transform:scaleX(0.9287);">Profil:</span></div>
<div style="left:767.2px;top:279.4px;width:152.5px;height:21.4px;background:#3a3a3a;box-sizing:border-box;border:1.5px solid #5c88cc;border-radius:3.5px;"></div>
<div style="left:772.30px;top:285px;font-size:11.5px;line-height:12px;height:12px;color:#f2f2f2;white-space:pre;"><span style="display:inline-block;transform-origin:0 0;transform:scaleX(0.9557);">Selbst definiert</span></div>
<svg style="left:909.1px;top:287.7px;" width="8" height="6" viewBox="0 0 8 6"><path d="M0.4 0.8H7.2L3.8 4.6Z" fill="#ececec"/></svg>
<div style="left:924.4px;top:279.4px;width:102px;height:21.4px;background:#3e3e3e;box-sizing:border-box;border:1px solid #323232;border-radius:3px;box-shadow:0 0 0 1px #484848;"></div>
<div style="left:933.30px;top:285px;font-size:11.5px;line-height:12px;height:12px;color:#f2f2f2;white-space:pre;"><span style="display:inline-block;transform-origin:0 0;transform:scaleX(0.9352);">Speichern unter...</span></div>
<div style="left:723.20px;top:311px;font-size:11.5px;line-height:12px;height:12px;color:#f0f0f0;white-space:pre;"><span style="display:inline-block;transform-origin:0 0;transform:scaleX(0.9067);">Drucker:</span></div>
<div style="left:767.2px;top:305.7px;width:152.5px;height:21.3px;background:#3a3a3a;box-sizing:border-box;border:1px solid #2b2b2b;border-radius:3px;box-shadow:0 0 0 1px #464646;"></div>
<div style="left:772.30px;top:311px;font-size:11.5px;line-height:12px;height:12px;color:#f2f2f2;white-space:pre;width:131.8px;overflow:hidden;"><span style="display:inline-block;transform-origin:0 0;transform:scaleX(0.9115);">Brother DCP-J1050DW Print</span></div>
<svg style="left:908.4px;top:313.95px;" width="8" height="6" viewBox="0 0 8 6"><path d="M0.4 0.8H7.2L3.8 4.6Z" fill="#ececec"/></svg>
<div style="left:924.4px;top:305.7px;width:102px;height:21.3px;background:#3e3e3e;box-sizing:border-box;border:1px solid #323232;border-radius:3px;box-shadow:0 0 0 1px #484848;"></div>
<div style="left:938.60px;top:311px;font-size:11.5px;line-height:12px;height:12px;color:#f2f2f2;white-space:pre;"><span style="display:inline-block;transform-origin:0 0;transform:scaleX(0.9045);">Eigenschaften...</span></div>
<div style="left:727.20px;top:337px;font-size:11.5px;line-height:12px;height:12px;color:#f0f0f0;white-space:pre;"><span style="display:inline-block;transform-origin:0 0;transform:scaleX(0.9076);">Kopien:</span></div>
<div style="left:767.2px;top:331.6px;width:74.6px;height:21px;background:#2e2e2e;box-sizing:border-box;border:1px solid #282828;border-radius:2.5px;box-shadow:0 0 0 1px #454545;"></div>
<div style="left:774.00px;top:337px;font-size:11.5px;line-height:12px;height:12px;color:#f2f2f2;white-space:pre;">1</div>
<div style="left:847px;top:336.2px;width:10px;height:10px;background:#4b4b4b;border-radius:1.5px;"></div>
<div style="left:862.00px;top:337px;font-size:11.5px;line-height:12px;height:12px;color:#8c8c8c;white-space:pre;"><span style="display:inline-block;transform-origin:0 0;transform:scaleX(0.9408);">Sortieren</span></div>
<div style="left:725.30px;top:361px;font-size:11.5px;line-height:12px;height:12px;color:#f0f0f0;white-space:pre;"><span style="display:inline-block;transform-origin:0 0;transform:scaleX(0.8841);">Bereich:</span></div>
<div style="left:767.2px;top:357.9px;width:179.6px;height:17.6px;background:#3a3a3a;box-sizing:border-box;border:1px solid #2b2b2b;border-radius:3px;box-shadow:0 0 0 1px #464646;"></div>
<div style="left:772.50px;top:361px;font-size:11.5px;line-height:12px;height:12px;color:#f2f2f2;white-space:pre;"><span style="display:inline-block;transform-origin:0 0;transform:scaleX(0.9597);">Dokument</span></div>
<svg style="left:935.4px;top:364.3px;" width="8" height="6" viewBox="0 0 8 6"><path d="M0.4 0.8H7.2L3.8 4.6Z" fill="#ececec"/></svg>
<div style="left:730.80px;top:385px;font-size:11.5px;line-height:12px;height:12px;color:#f0f0f0;white-space:pre;"><span style="display:inline-block;transform-origin:0 0;transform:scaleX(0.8882);">Seiten:</span></div>
<div style="left:767.2px;top:380.4px;width:100.6px;height:21.1px;background:#2e2e2e;box-sizing:border-box;border:1px solid #282828;border-radius:2.5px;box-shadow:0 0 0 1px #454545;"></div>
<div style="left:687.10px;top:412px;font-size:11.5px;line-height:12px;height:12px;color:#f0f0f0;white-space:pre;"><span style="display:inline-block;transform-origin:0 0;transform:scaleX(0.9226);">Anpassungstyp:</span></div>
<div style="left:767.2px;top:407px;width:100.6px;height:21.4px;background:#3a3a3a;box-sizing:border-box;border:1px solid #2b2b2b;border-radius:3px;box-shadow:0 0 0 1px #464646;"></div>
<div style="left:776.00px;top:412px;font-size:11.5px;line-height:12px;height:12px;color:#f2f2f2;white-space:pre;"><span style="display:inline-block;transform-origin:0 0;transform:scaleX(0.9256);">Skalierung</span></div>
<svg style="left:856.4px;top:415.3px;" width="8" height="6" viewBox="0 0 8 6"><path d="M0.4 0.8H7.2L3.8 4.6Z" fill="#ececec"/></svg>
<div style="left:871.80px;top:412px;font-size:11.5px;line-height:12px;height:12px;color:#f0f0f0;white-space:pre;width:48.4px;overflow:hidden;"><span style="display:inline-block;transform-origin:0 0;transform:scaleX(0.9351);">Skalierung:</span></div>
<div style="left:938.4px;top:407.6px;width:74.7px;height:21px;background:#2e2e2e;box-sizing:border-box;border:1px solid #282828;border-radius:2.5px;box-shadow:0 0 0 1px #454545;"></div>
<div style="left:944.70px;top:413px;font-size:11.5px;line-height:12px;height:12px;color:#f2f2f2;white-space:pre;"><span style="display:inline-block;transform-origin:0 0;transform:scaleX(0.8924);">100 %</span></div>
<div style="left:719.00px;top:437px;font-size:11.5px;line-height:12px;height:12px;color:#f0f0f0;white-space:pre;"><span style="display:inline-block;transform-origin:0 0;transform:scaleX(0.9095);">Inklusive:</span></div>
<div style="left:767.2px;top:433.6px;width:100.6px;height:18px;background:#3a3a3a;box-sizing:border-box;border:1px solid #2b2b2b;border-radius:3px;box-shadow:0 0 0 1px #464646;"></div>
<div style="left:772.10px;top:437px;font-size:11.5px;line-height:12px;height:12px;color:#f2f2f2;white-space:pre;"><span style="display:inline-block;transform-origin:0 0;transform:scaleX(0.9402);">Alle Bögen</span></div>
<svg style="left:856.4px;top:440.20000000000005px;" width="8" height="6" viewBox="0 0 8 6"><path d="M0.4 0.8H7.2L3.8 4.6Z" fill="#ececec"/></svg>
<div style="left:873px;top:435.8px;width:10.2px;height:10.2px;background:#636363;border-radius:1.5px;"></div>
<div style="left:888.40px;top:435px;font-size:11.5px;line-height:12px;height:12px;color:#f0f0f0;white-space:pre;width:31.5px;overflow:hidden;"><span style="display:inline-block;transform-origin:0 0;transform:scaleX(0.9840);">Umkehren</span></div>
<div style="left:702.00px;top:462px;font-size:11.5px;line-height:12px;height:12px;color:#f0f0f0;white-space:pre;"><span style="display:inline-block;transform-origin:0 0;transform:scaleX(0.9480);">Ausrichtung:</span></div>
<div style="left:767.2px;top:457px;width:100.6px;height:21.6px;background:#3a3a3a;box-sizing:border-box;border:1px solid #2b2b2b;border-radius:3px;box-shadow:0 0 0 1px #464646;"></div>
<div style="left:776.00px;top:462px;font-size:11.5px;line-height:12px;height:12px;color:#f2f2f2;white-space:pre;"><span style="display:inline-block;transform-origin:0 0;transform:scaleX(0.9561);">Automatisch</span></div>
<svg style="left:856.4px;top:465.40000000000003px;" width="8" height="6" viewBox="0 0 8 6"><path d="M0.4 0.8H7.2L3.8 4.6Z" fill="#ececec"/></svg>
<div style="left:1043px;top:275px;width:200px;height:200px;background:#ffffff;"></div>
<svg style="left:1043px;top:275px;" width="200" height="200" viewBox="0 0 200 200"><rect x="9.6" y="36.4" width="181.2" height="127.6" fill="none" stroke="#111" stroke-width="1.3"/><path d="M190.2 36V164.4" stroke="#111" stroke-width="1.6"/><rect x="11.6" y="38.4" width="177" height="123.6" fill="none" stroke="#f23434" stroke-width="1.3" stroke-dasharray="2 1"/><rect x="39.4" y="71.4" width="121.2" height="57.6" fill="none" stroke="#2a9c9c" stroke-width="1.2" stroke-dasharray="2.8 1.4"/><circle cx="100" cy="75.6" r="1.2" fill="#000"/></svg>
<div style="left:1111.30px;top:368px;font-size:13.5px;line-height:15px;height:15px;color:#111;white-space:pre;font-weight:bold;-webkit-text-stroke:.3px #111;"><span style="display:inline-block;transform-origin:0 0;transform:scaleX(0.9917);">Verstehen</span></div>
<svg style="left:1088px;top:478px;" width="112" height="13" viewBox="0 0 112 13"><path d="M2.6 1.4V11" stroke="#b4b4b4" stroke-width="1.2"/><path d="M12 1.4V11L4 6.2Z" fill="#b4b4b4"/><path d="M29 1.6V10.8L21 6.2Z" fill="#9c9c9c"/><path d="M82 1.4V11L90.4 6.2Z" fill="#ececec"/><path d="M99 1.4V11L107 6.2Z" fill="#ececec"/><path d="M108.4 1.4V11" stroke="#ececec" stroke-width="1.2"/></svg>
<div style="left:1137.80px;top:481px;font-size:11.5px;line-height:12px;height:12px;color:#f0f0f0;white-space:pre;"><span style="display:inline-block;transform-origin:0 0;transform:scaleX(0.9445);">1/2</span></div>
<div style="left:683.6px;top:540.3px;width:148.3px;height:131.2px;background:#2f2f2f;box-shadow:0 0 0 1px #2a2a2a;"></div>
<div style="left:683.6px;top:540.3px;width:148.3px;height:26.6px;background:#5f8ed2;"></div>
<div style="left:689.20px;top:548px;font-size:11.5px;line-height:12px;height:12px;color:#f4f4f4;white-space:pre;"><span style="display:inline-block;transform-origin:0 0;transform:scaleX(0.9470);">Layout</span></div>
<div style="left:689.20px;top:574px;font-size:11.5px;line-height:12px;height:12px;color:#f4f4f4;white-space:pre;"><span style="display:inline-block;transform-origin:0 0;transform:scaleX(0.8915);">Rastern</span></div>
<div style="left:689.20px;top:600px;font-size:11.5px;line-height:12px;height:12px;color:#f4f4f4;white-space:pre;"><span style="display:inline-block;transform-origin:0 0;transform:scaleX(0.9573);">Anschnitte und Marken</span></div>
<div style="left:689.20px;top:626px;font-size:11.5px;line-height:12px;height:12px;color:#f4f4f4;white-space:pre;"><span style="display:inline-block;transform-origin:0 0;transform:scaleX(0.9374);">Farbverwaltung</span></div>
<div style="left:689.20px;top:652px;font-size:11.5px;line-height:12px;height:12px;color:#f4f4f4;white-space:pre;"><span style="display:inline-block;transform-origin:0 0;transform:scaleX(0.9446);">In Datei drucken</span></div>
<div style="left:856.30px;top:548px;font-size:11.5px;line-height:12px;height:12px;color:#f0f0f0;white-space:pre;"><span style="display:inline-block;transform-origin:0 0;transform:scaleX(0.9160);">Papiergröße:</span></div>
<div style="left:921.2px;top:545.1px;width:197.7px;height:17.6px;background:#3a3a3a;box-sizing:border-box;border:1px solid #2b2b2b;border-radius:3px;box-shadow:0 0 0 1px #464646;"></div>
<div style="left:926.50px;top:548px;font-size:11.5px;line-height:12px;height:12px;color:#f2f2f2;white-space:pre;"><span style="display:inline-block;transform-origin:0 0;transform:scaleX(0.9501);">Durch Treiber definiert</span></div>
<svg style="left:1107px;top:551.5px;" width="8" height="6" viewBox="0 0 8 6"><path d="M0.4 0.8H7.2L3.8 4.6Z" fill="#ececec"/></svg>
<div style="left:887.30px;top:572px;font-size:11.5px;line-height:12px;height:12px;color:#f0f0f0;white-space:pre;"><span style="display:inline-block;transform-origin:0 0;transform:scaleX(0.8996);">Breite:</span></div>
<div style="left:921.2px;top:567.6px;width:74.8px;height:19.2px;background:#2e2e2e;box-sizing:border-box;border:1px solid #282828;border-radius:2.5px;box-shadow:0 0 0 1px #454545;"></div>
<div style="left:927.30px;top:572px;font-size:11.5px;line-height:12px;height:12px;color:#8a8a8a;white-space:pre;"><span style="display:inline-block;transform-origin:0 0;transform:scaleX(0.9132);">21 cm</span></div>
<div style="left:1010.00px;top:572px;font-size:11.5px;line-height:12px;height:12px;color:#f0f0f0;white-space:pre;"><span style="display:inline-block;transform-origin:0 0;transform:scaleX(0.9320);">Höhe:</span></div>
<div style="left:1043.5px;top:567.6px;width:74.8px;height:19.2px;background:#2e2e2e;box-sizing:border-box;border:1px solid #282828;border-radius:2.5px;box-shadow:0 0 0 1px #454545;"></div>
<div style="left:1048.70px;top:572px;font-size:11.5px;line-height:12px;height:12px;color:#8a8a8a;white-space:pre;"><span style="display:inline-block;transform-origin:0 0;transform:scaleX(0.9167);">29,7 cm</span></div>
<div style="left:853.40px;top:595px;font-size:11.5px;line-height:12px;height:12px;color:#f0f0f0;white-space:pre;"><span style="display:inline-block;transform-origin:0 0;transform:scaleX(0.9596);">Doppelseitig:</span></div>
<div style="left:921.2px;top:591.9px;width:197.7px;height:17.8px;background:#3a3a3a;box-sizing:border-box;border:1px solid #2b2b2b;border-radius:3px;box-shadow:0 0 0 1px #464646;"></div>
<div style="left:926.50px;top:595px;font-size:11.5px;line-height:12px;height:12px;color:#f2f2f2;white-space:pre;"><span style="display:inline-block;transform-origin:0 0;transform:scaleX(0.9077);">Einzelseitig</span></div>
<svg style="left:1107px;top:598.4px;" width="8" height="6" viewBox="0 0 8 6"><path d="M0.4 0.8H7.2L3.8 4.6Z" fill="#ececec"/></svg>
<div style="left:881.30px;top:618px;font-size:11.5px;line-height:12px;height:12px;color:#f0f0f0;white-space:pre;"><span style="display:inline-block;transform-origin:0 0;transform:scaleX(0.9684);">Modell:</span></div>
<div style="left:921.2px;top:614.9px;width:197.7px;height:17.8px;background:#3a3a3a;box-sizing:border-box;border:1px solid #2b2b2b;border-radius:3px;box-shadow:0 0 0 1px #464646;"></div>
<div style="left:926.50px;top:618px;font-size:11.5px;line-height:12px;height:12px;color:#f2f2f2;white-space:pre;"><span style="display:inline-block;transform-origin:0 0;transform:scaleX(0.8748);">Einzel</span></div>
<svg style="left:1107px;top:621.4px;" width="8" height="6" viewBox="0 0 8 6"><path d="M0.4 0.8H7.2L3.8 4.6Z" fill="#ececec"/></svg>
<div style="left:1112px;top:785px;width:78.6px;height:18.6px;background:#3e3e3e;box-sizing:border-box;border:1px solid #323232;border-radius:3px;box-shadow:0 0 0 1px #484848;"></div>
<div style="left:1143.50px;top:788px;font-size:11.5px;line-height:12px;height:12px;color:#f2f2f2;white-space:pre;"><span style="display:inline-block;transform-origin:0 0;transform:scaleX(0.9509);">OK</span></div>
<div style="left:1195.6px;top:785px;width:73.8px;height:18.6px;background:#3e3e3e;box-sizing:border-box;border:1px solid #323232;border-radius:3px;box-shadow:0 0 0 1px #484848;"></div>
<div style="left:1206.00px;top:788px;font-size:11.5px;line-height:12px;height:12px;color:#f2f2f2;white-space:pre;"><span style="display:inline-block;transform-origin:0 0;transform:scaleX(0.9438);">Abbrechen</span></div>
</div></body></html>
